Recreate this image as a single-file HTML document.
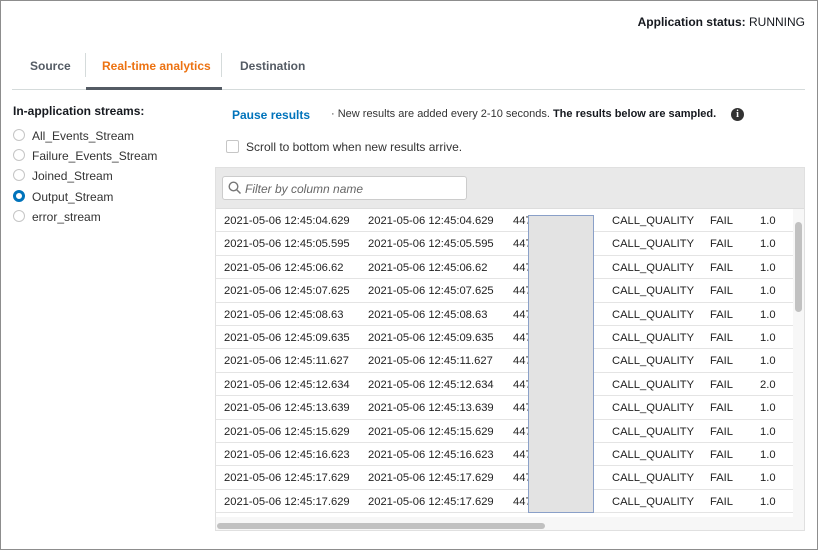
<!DOCTYPE html>
<html><head><style>
*{margin:0;padding:0;box-sizing:border-box}
body{width:818px;height:550px;background:#fff;font-family:"Liberation Sans",Arial,sans-serif;font-size:12px;color:#16191f;position:relative;overflow:hidden}
.frame{position:absolute;left:0;top:0;width:818px;height:550px;border:1px solid #8d8d8d}
.abs{position:absolute;white-space:nowrap}
.radio{position:absolute;left:13px;width:12px;height:12px;border:1px solid #c6c6c6;border-radius:50%;background:#fff}
.radio.on{border:3.5px solid #0073bb}
.row{position:absolute;left:216px;width:577px;height:23.4px;border-bottom:1px solid #e4e4e4;font-size:11.2px;color:#222}
.row span{position:absolute;top:6px}
</style></head><body>
<div class="frame"></div>
<div class="abs" style="right:13px;top:15px;font-size:12px"><b>Application status:</b> RUNNING</div>

<div class="abs" style="left:30px;top:59px;font-weight:bold;color:#545b64">Source</div>
<div class="abs" style="left:85px;top:53px;width:1px;height:24px;background:#d5dbdb"></div>
<div class="abs" style="left:102px;top:59px;font-weight:bold;color:#ec7211">Real-time analytics</div>
<div class="abs" style="left:221px;top:53px;width:1px;height:24px;background:#d5dbdb"></div>
<div class="abs" style="left:240px;top:59px;font-weight:bold;color:#545b64">Destination</div>
<div class="abs" style="left:12px;top:89px;width:793px;height:1px;background:#d5dbdb"></div>
<div class="abs" style="left:86px;top:87px;width:136px;height:3px;background:#545b64"></div>

<div class="abs" style="left:13px;top:104px;font-weight:bold">In-application streams:</div>
<div class="radio" style="top:129px"></div><div class="abs" style="left:32px;top:129px;color:#333">All_Events_Stream</div>
<div class="radio" style="top:149px"></div><div class="abs" style="left:32px;top:149px;color:#333">Failure_Events_Stream</div>
<div class="radio" style="top:169px"></div><div class="abs" style="left:32px;top:169px;color:#333">Joined_Stream</div>
<div class="radio on" style="top:190px"></div><div class="abs" style="left:32px;top:190px;color:#333">Output_Stream</div>
<div class="radio" style="top:210px"></div><div class="abs" style="left:32px;top:210px;color:#333">error_stream</div>

<div class="abs" style="left:232px;top:108px;font-weight:bold;color:#0073bb">Pause results</div>
<div class="abs" style="left:331px;top:108px;font-size:11px;color:#333">· New results are added every 2-10 seconds. <b style="color:#16191f">The results below are sampled.</b></div>
<div class="abs" style="left:731px;top:108px;width:13px;height:13px;border-radius:50%;background:#333;color:#fff;font-size:10px;font-weight:bold;text-align:center;line-height:13px;font-family:'Liberation Serif',serif">i</div>
<div class="abs" style="left:226px;top:140px;width:13px;height:13px;border:1px solid #c6c6c6;border-radius:2px"></div>
<div class="abs" style="left:246px;top:140px;color:#333">Scroll to bottom when new results arrive.</div>

<div class="abs" style="left:215px;top:167px;width:590px;height:364px;border:1px solid #e0e0e0;background:#f7f7f7"></div>
<div class="abs" style="left:216px;top:168px;width:588px;height:41px;background:#e9e9e9;border-bottom:1px solid #ddd"></div>
<div class="abs" style="left:222px;top:176px;width:245px;height:24px;background:#fff;border:1px solid #ccc;border-radius:3px"></div>
<svg class="abs" style="left:228px;top:181px" width="14" height="14" viewBox="0 0 14 14"><circle cx="5.5" cy="5.5" r="4.3" fill="none" stroke="#777" stroke-width="1.4"/><line x1="8.6" y1="8.6" x2="12.5" y2="12.5" stroke="#777" stroke-width="1.5"/></svg>
<div class="abs" style="left:245px;top:182px;font-style:italic;color:#666;font-size:12px">Filter by column name</div>
<div class="abs" style="left:216px;top:209px;width:577px;height:308px;background:#fff"></div>

<div class="row" style="top:209px"><span style="left:8px">2021-05-06 12:45:04.629</span><span style="left:152px">2021-05-06 12:45:04.629</span><span style="left:297px">447</span><span style="left:396px">CALL_QUALITY</span><span style="left:494px">FAIL</span><span style="left:544px">1.0</span></div>
<div class="row" style="top:232.4px"><span style="left:8px">2021-05-06 12:45:05.595</span><span style="left:152px">2021-05-06 12:45:05.595</span><span style="left:297px">447</span><span style="left:396px">CALL_QUALITY</span><span style="left:494px">FAIL</span><span style="left:544px">1.0</span></div>
<div class="row" style="top:255.8px"><span style="left:8px">2021-05-06 12:45:06.62</span><span style="left:152px">2021-05-06 12:45:06.62</span><span style="left:297px">447</span><span style="left:396px">CALL_QUALITY</span><span style="left:494px">FAIL</span><span style="left:544px">1.0</span></div>
<div class="row" style="top:279.2px"><span style="left:8px">2021-05-06 12:45:07.625</span><span style="left:152px">2021-05-06 12:45:07.625</span><span style="left:297px">447</span><span style="left:396px">CALL_QUALITY</span><span style="left:494px">FAIL</span><span style="left:544px">1.0</span></div>
<div class="row" style="top:302.6px"><span style="left:8px">2021-05-06 12:45:08.63</span><span style="left:152px">2021-05-06 12:45:08.63</span><span style="left:297px">447</span><span style="left:396px">CALL_QUALITY</span><span style="left:494px">FAIL</span><span style="left:544px">1.0</span></div>
<div class="row" style="top:326px"><span style="left:8px">2021-05-06 12:45:09.635</span><span style="left:152px">2021-05-06 12:45:09.635</span><span style="left:297px">447</span><span style="left:396px">CALL_QUALITY</span><span style="left:494px">FAIL</span><span style="left:544px">1.0</span></div>
<div class="row" style="top:349.4px"><span style="left:8px">2021-05-06 12:45:11.627</span><span style="left:152px">2021-05-06 12:45:11.627</span><span style="left:297px">447</span><span style="left:396px">CALL_QUALITY</span><span style="left:494px">FAIL</span><span style="left:544px">1.0</span></div>
<div class="row" style="top:372.8px"><span style="left:8px">2021-05-06 12:45:12.634</span><span style="left:152px">2021-05-06 12:45:12.634</span><span style="left:297px">447</span><span style="left:396px">CALL_QUALITY</span><span style="left:494px">FAIL</span><span style="left:544px">2.0</span></div>
<div class="row" style="top:396.2px"><span style="left:8px">2021-05-06 12:45:13.639</span><span style="left:152px">2021-05-06 12:45:13.639</span><span style="left:297px">447</span><span style="left:396px">CALL_QUALITY</span><span style="left:494px">FAIL</span><span style="left:544px">1.0</span></div>
<div class="row" style="top:419.6px"><span style="left:8px">2021-05-06 12:45:15.629</span><span style="left:152px">2021-05-06 12:45:15.629</span><span style="left:297px">447</span><span style="left:396px">CALL_QUALITY</span><span style="left:494px">FAIL</span><span style="left:544px">1.0</span></div>
<div class="row" style="top:443px"><span style="left:8px">2021-05-06 12:45:16.623</span><span style="left:152px">2021-05-06 12:45:16.623</span><span style="left:297px">447</span><span style="left:396px">CALL_QUALITY</span><span style="left:494px">FAIL</span><span style="left:544px">1.0</span></div>
<div class="row" style="top:466.4px"><span style="left:8px">2021-05-06 12:45:17.629</span><span style="left:152px">2021-05-06 12:45:17.629</span><span style="left:297px">447</span><span style="left:396px">CALL_QUALITY</span><span style="left:494px">FAIL</span><span style="left:544px">1.0</span></div>
<div class="row" style="top:489.8px"><span style="left:8px">2021-05-06 12:45:17.629</span><span style="left:152px">2021-05-06 12:45:17.629</span><span style="left:297px">447</span><span style="left:396px">CALL_QUALITY</span><span style="left:494px">FAIL</span><span style="left:544px">1.0</span></div>

<div class="abs" style="left:528px;top:215px;width:66px;height:298px;background:#e3e3e3;border:1px solid #8aa0c8"></div>
<div class="abs" style="left:795px;top:222px;width:7px;height:90px;background:#c1c1c1;border-radius:4px"></div>
<div class="abs" style="left:217px;top:523px;width:328px;height:6px;background:#c1c1c1;border-radius:3px"></div>
</body></html>
